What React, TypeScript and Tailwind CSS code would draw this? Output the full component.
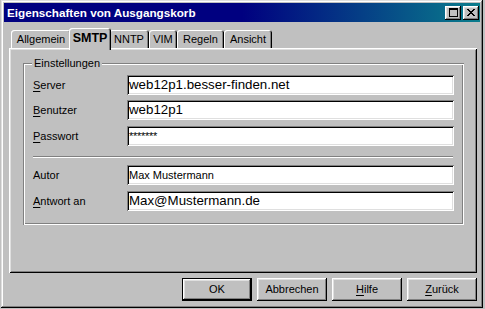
const raised =
  "shadow-[inset_-1px_-1px_#000,inset_1px_1px_#fff,inset_-2px_-2px_#808080,inset_2px_2px_#dfdfdf]";

const tabs = [
  { label: "Allgemein", w: "w-[60px]" },
  { label: "SMTP", w: "w-[42px]", active: true },
  { label: "NNTP", w: "w-[40px]" },
  { label: "VIM", w: "w-[28px]" },
  { label: "Regeln", w: "w-[47px]" },
  { label: "Ansicht", w: "w-[48px]" },
];

function Field({ value, big, secret }: { value: string; big?: boolean; secret?: boolean }) {
  return (
    <div className="h-[20px] w-[327px] bg-white pl-[2px] flex items-center overflow-hidden shadow-[inset_1px_1px_#808080,inset_-1px_-1px_#fff,inset_2px_2px_#000,inset_-2px_-2px_#dfdfdf]">
      {secret ? (
        <span className="text-[11px] leading-none tracking-[-0.3px] text-black">{value}</span>
      ) : (
        <span className={big ? "text-[13.3px] leading-none text-black" : "text-[11px] leading-none text-black"}>{value}</span>
      )}
    </div>
  );
}

function Row({ label, children, mt }: { label: React.ReactNode; children: React.ReactNode; mt: string }) {
  return (
    <div className={`flex items-center h-[20px] ${mt}`}>
      <div className="w-[94px] text-[11px] text-black">{label}</div>
      {children}
    </div>
  );
}

function Btn({ children, main }: { children: React.ReactNode; main?: boolean }) {
  return (
    <div
      className={
        main
          ? "w-[70px] h-[23px] flex items-center justify-center text-[11px] text-black shadow-[inset_0_0_0_1px_#000,inset_-2px_-2px_#000,inset_2px_2px_#fff,inset_-3px_-3px_#808080,inset_3px_3px_#dfdfdf]"
          : `w-[70px] h-[23px] flex items-center justify-center text-[11px] text-black ${raised}`
      }
    >
      {children}
    </div>
  );
}

export default function App() {
  return (
    <div className="w-[485px] h-[309px] bg-[#c0c0c0] pl-[1px] font-['Liberation_Sans',Arial,sans-serif] overflow-hidden">
      {/* Window */}
      <div className="w-[482px] h-[308px] p-[3px] flex flex-col shadow-[inset_-1px_-1px_#000,inset_1px_1px_#dfdfdf,inset_-2px_-2px_#808080,inset_2px_2px_#fff]">
        {/* Title bar */}
        <div className="h-[19px] flex items-center justify-between pl-[3px] pr-[1px] bg-[linear-gradient(90deg,#000080_50%,#0a7d8c)]">
          <span className="text-white font-bold text-[11.7px] leading-none">Eigenschaften von Ausgangskorb</span>
          <div className="flex gap-[2px]">
            <div className={`w-[16px] h-[14px] bg-[#c0c0c0] flex items-center justify-center ${raised}`}>
              <svg width="9" height="9" viewBox="0 0 9 9" shapeRendering="crispEdges">
                <path d="M0 0h9v2H0z M0 2h1v7H0z M8 2h1v7H8z M0 8h9v1H0z" fill="#000" />
              </svg>
            </div>
            <div className={`w-[16px] h-[14px] bg-[#c0c0c0] flex items-center justify-center ${raised}`}>
              <svg width="8" height="7" viewBox="0 0 8 7" shapeRendering="crispEdges">
                <path
                  d="M0 0h2v1H0z M6 0h2v1H6z M1 1h2v1H1z M5 1h2v1H5z M2 2h4v1H2z M3 3h2v1H3z M2 4h4v1H2z M1 5h2v1H1z M5 5h2v1H5z M0 6h2v1H0z M6 6h2v1H6z"
                  fill="#000"
                />
              </svg>
            </div>
          </div>
        </div>

        {/* Tabs */}
        <div className="relative z-10 mt-[6px] h-[20px] flex items-end pl-[7px]">
          {tabs.map((t) =>
            t.active ? (
              <div
                key={t.label}
                className={`relative z-10 ${t.w} h-[22px] -mx-[2px] -mb-[2px] pb-[2px] bg-[#c0c0c0] rounded-t-[3px] flex items-center justify-center text-[12.5px] font-bold text-black shadow-[inset_1px_1px_#fff,inset_-1px_0_#000,inset_-2px_0_#808080]`}
              >
                {t.label}
              </div>
            ) : (
              <div
                key={t.label}
                className={`${t.w} h-[18px] bg-[#c0c0c0] rounded-t-[3px] flex items-center justify-center text-[11px] text-black shadow-[inset_1px_1px_#fff,inset_-1px_0_#000,inset_-2px_0_#808080]`}
              >
                {t.label}
              </div>
            )
          )}
        </div>

        {/* Tab panel */}
        <div className="ml-[5px] w-[468px] h-[225px] pt-[15px] pl-[14px] shadow-[inset_1px_1px_#fff,inset_-1px_-1px_#000,inset_2px_2px_#dfdfdf,inset_-2px_-2px_#808080]">
          <div className="relative w-[441px] h-[162px] pt-[12px] pl-[10px] flex flex-col shadow-[inset_1px_1px_#808080,inset_-1px_-1px_#fff,inset_2px_2px_#fff,inset_-2px_-2px_#808080]">
            <span className="absolute left-[9px] -top-[7px] px-[2px] bg-[#c0c0c0] text-[11px] leading-[14px] text-black">
              Einstellungen
            </span>
            <Row mt="mt-0" label={<><span className="underline underline-offset-[2px]">S</span>erver</>}>
              <Field value="web12p1.besser-finden.net" big />
            </Row>
            <Row mt="mt-[5px]" label={<><span className="underline underline-offset-[2px]">B</span>enutzer</>}>
              <Field value="web12p1" big />
            </Row>
            <Row mt="mt-[6px]" label={<><span className="underline underline-offset-[2px]">P</span>asswort</>}>
              <Field value="*******" secret />
            </Row>
            <div className="mt-[10px] w-[420px] h-[2px] border-t border-t-[#808080] border-b border-b-white" />
            <Row mt="mt-[7px]" label="Autor">
              <Field value="Max Mustermann" />
            </Row>
            <Row mt="mt-[6px]" label={<><span className="underline underline-offset-[2px]">A</span>ntwort an</>}>
              <Field value="Max@Mustermann.de" big />
            </Row>
          </div>
        </div>

        {/* Buttons */}
        <div className="mt-[5px] flex justify-end gap-[5px] pr-[3px]">
          <Btn main>OK</Btn>
          <Btn>Abbrechen</Btn>
          <Btn>
            <span className="underline underline-offset-[2px]">H</span>ilfe
          </Btn>
          <Btn>
            <span className="underline underline-offset-[2px]">Z</span>urück
          </Btn>
        </div>
      </div>
    </div>
  );
}
